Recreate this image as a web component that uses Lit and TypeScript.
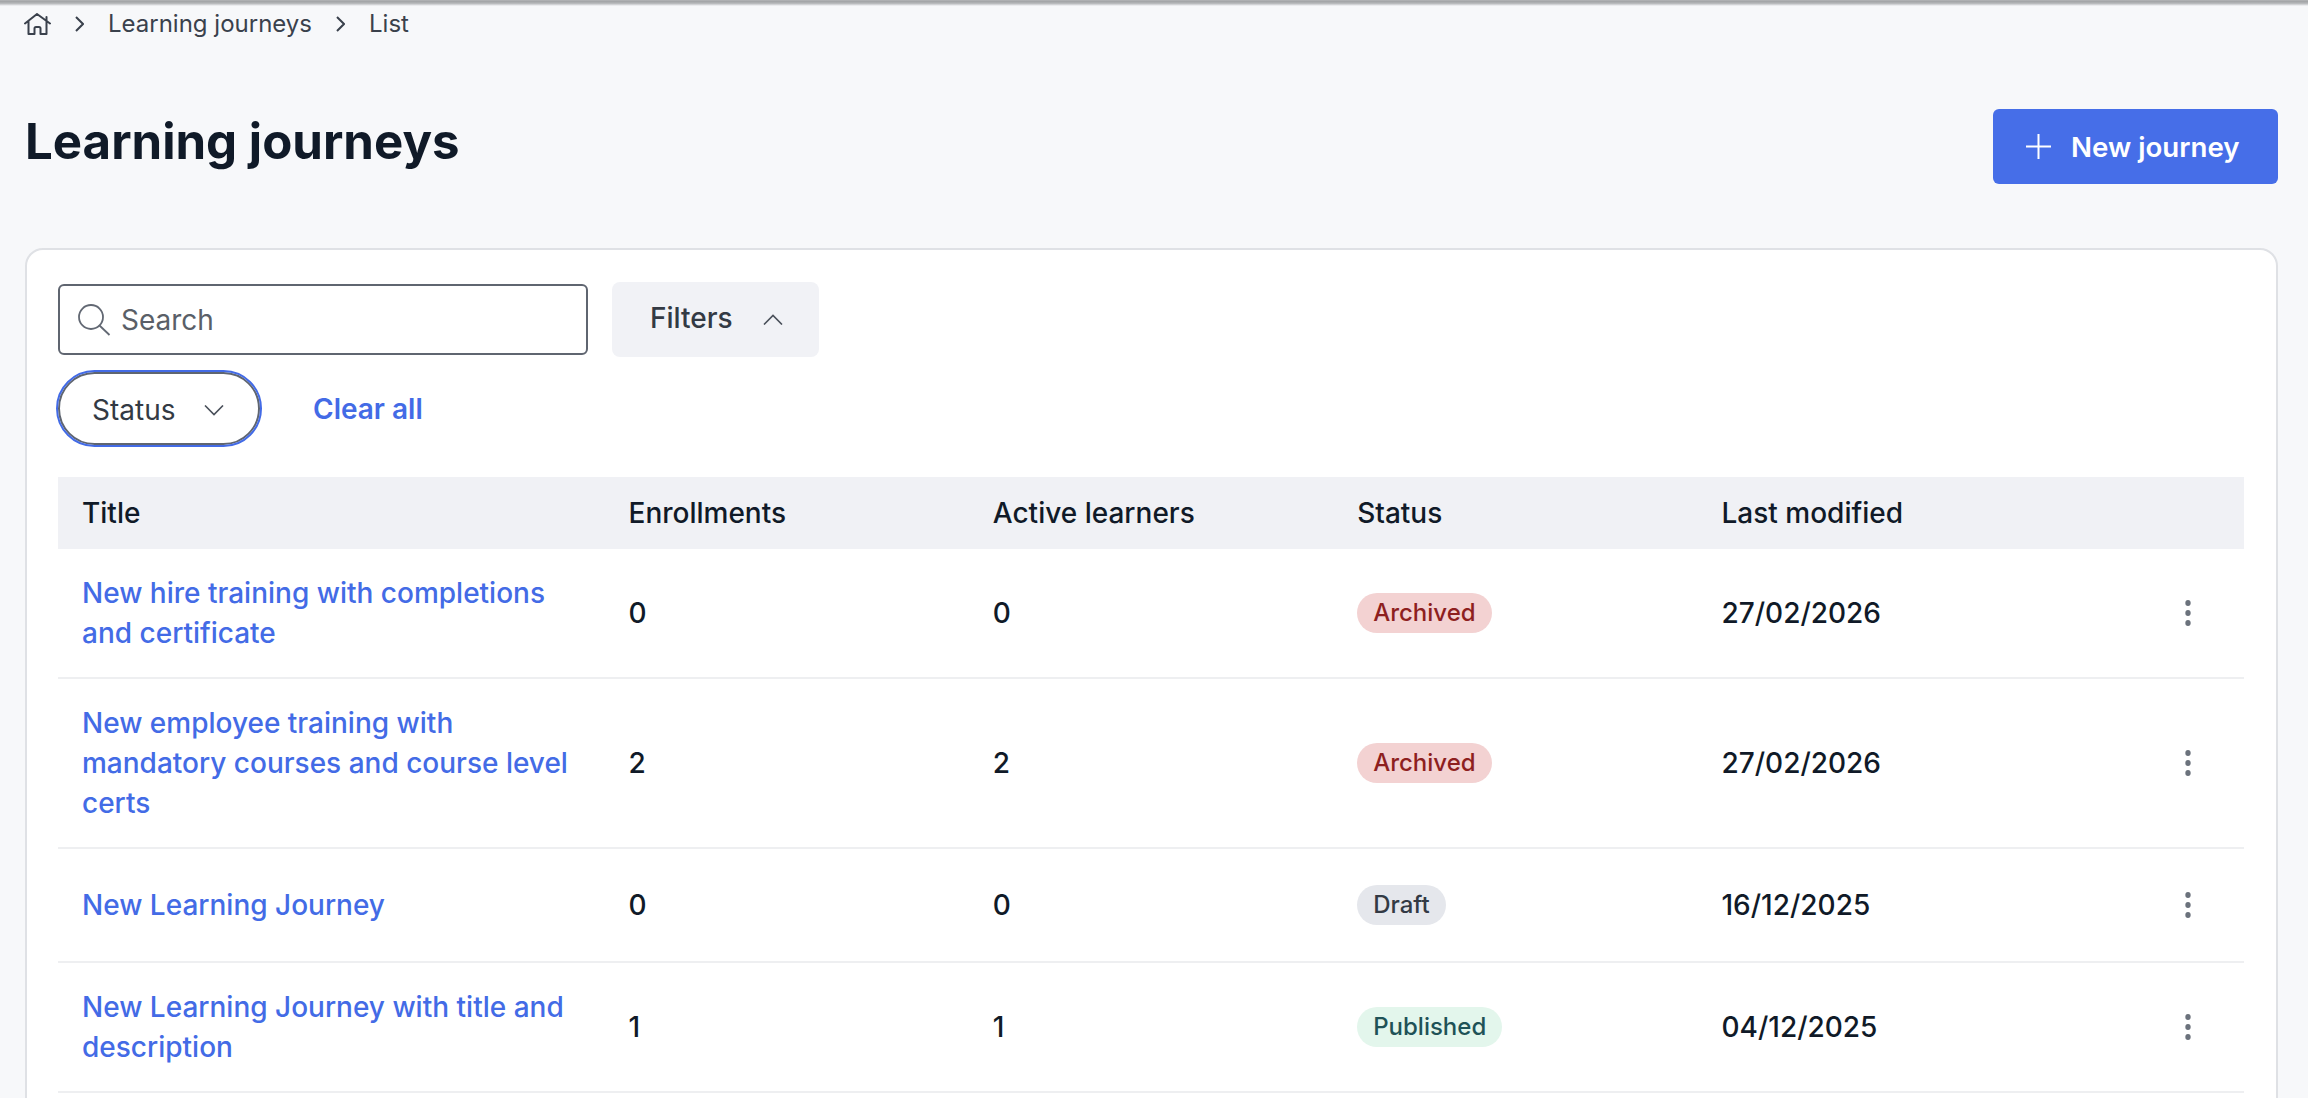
import { LitElement, html, css, svg } from "lit";
import { customElement } from "lit/decorators.js";

const rows = [
  { title: "New hire training with completions and certificate", enrollments: 0, active: 0, status: "Archived", date: "27/02/2026" },
  { title: "New employee training with mandatory courses and course level certs", enrollments: 2, active: 2, status: "Archived", date: "27/02/2026" },
  { title: "New Learning Journey", enrollments: 0, active: 0, status: "Draft", date: "16/12/2025" },
  { title: "New Learning Journey with title and description", enrollments: 1, active: 1, status: "Published", date: "04/12/2025" },
];

const chevronRight = svg`<path d="M1 1l7 7-7 7" fill="none" stroke="currentColor" stroke-width="2"/>`;

@customElement("app-root")
class AppRoot extends LitElement {
  static styles = css`
    :host {
      display: block;
      height: 1098px;
      overflow: hidden;
      background: #f7f8fa;
      font-family: Inter, "Noto Sans", sans-serif;
      color: #101a28;
    }

    .topbar {
      height: 6px;
      background: linear-gradient(#b4b5b7, #a4a6a8 25%, #b4b6b8 55%, #d8d9dc 80%, #f7f8fa);
    }

    .crumbs {
      display: flex;
      align-items: center;
      height: 35px;
      padding-left: 24px;
      font-size: 24px;
      color: #3a414c;
    }

    .home {
      width: 27px;
      height: 22px;
      margin-right: 24px;
    }

    .sep {
      width: 9px;
      height: 16px;
      margin-right: 24px;
      color: #3a414c;
    }

    .crumbs .link {
      margin-right: 24px;
    }

    .header {
      display: flex;
      justify-content: space-between;
      align-items: flex-start;
      padding: 68px 30px 0 25px;
    }

    h1 {
      margin: 0;
      font-size: 49.2px;
      line-height: 64px;
      font-weight: 700;
    }

    .new {
      display: flex;
      align-items: center;
      gap: 19px;
      width: 285px;
      height: 75px;
      box-sizing: border-box;
      padding-left: 32px;
      background: #466ee8;
      border-radius: 6px;
      color: #fff;
      font-size: 27.7px;
      font-weight: 600;
    }

    .new svg {
      width: 27px;
      height: 27px;
    }

    .card {
      margin: 64px 30px 0 25px;
      padding: 32px 32px 0 31px;
      height: 900px;
      background: #fff;
      border: 2px solid #dfe1e5;
      border-radius: 18px;
    }

    .filters {
      display: flex;
      align-items: center;
      gap: 24px;
    }

    .search {
      display: flex;
      align-items: center;
      gap: 10px;
      box-sizing: border-box;
      width: 530px;
      height: 71px;
      padding-left: 17px;
      border: 2px solid #5f6570;
      border-radius: 6px;
      color: #5a5f68;
      font-size: 28px;
    }

    .search svg {
      width: 34px;
      height: 32px;
    }

    .toggle {
      display: flex;
      align-items: center;
      gap: 30px;
      box-sizing: border-box;
      width: 207px;
      height: 75px;
      padding-left: 38px;
      background: #f1f2f6;
      border-radius: 8px;
      color: #333a44;
      font-size: 28px;
      font-weight: 500;
    }

    .toggle span {
      padding-bottom: 3px;
    }

    .toggle svg,
    .pill svg {
      width: 20px;
      height: 11px;
      color: #4a505a;
    }

    .chips {
      display: flex;
      align-items: center;
      gap: 53px;
      margin-top: 15px;
    }

    .pill {
      display: flex;
      align-items: center;
      gap: 29px;
      box-sizing: border-box;
      width: 202px;
      height: 73px;
      padding-left: 32px;
      background: #fff;
      border: 2px solid #5f6570;
      border-radius: 37px;
      outline: 2px solid #436be6;
      color: #333a44;
      font-size: 28px;
    }

    .pill > * {
      margin-top: 3px;
    }

    .clear {
      color: #436be6;
      font-size: 28px;
      font-weight: 600;
    }

    .table {
      margin-top: 32px;
    }

    .row {
      display: grid;
      grid-template-columns: 3fr 2fr 2fr 2fr 2fr 1fr;
      align-items: center;
      padding: 24px 0;
      border-bottom: 2px solid #eeeff1;
      font-size: 28px;
      line-height: 40px;
      font-weight: 500;
    }

    .row.head {
      padding: 0;
      height: 72px;
      background: #f0f1f5;
      border-bottom: 0;
    }

    .row > * {
      padding-left: 24px;
      min-width: 0;
    }

    .row .title {
      padding-right: 24px;
      color: #436be6;
    }

    .badge {
      display: block;
      width: fit-content;
      height: 40px;
      margin-left: 24px;
      padding: 0 16px;
      border-radius: 20px;
      font-size: 24px;
      line-height: 40px;
    }

    .row .badge-cell {
      padding-left: 0;
    }

    .Archived {
      background: #f3d2d2;
      color: #8e1f1f;
    }

    .Draft {
      background: #e5e7ec;
      color: #333a44;
    }

    .Published {
      background: #e3f6ec;
      color: #1f5257;
    }

    .kebab {
      display: flex;
      justify-content: flex-end;
      align-items: center;
      height: 64px;
      padding-right: 53px;
    }

    .kebab svg {
      width: 6px;
      height: 26px;
    }
  `;

  render() {
    return html`
      <div class="topbar"></div>
      <nav class="crumbs">
        <svg class="home" viewBox="0 0 27 22" fill="none" stroke="currentColor" stroke-width="2" stroke-linejoin="round" stroke-linecap="round">
          <path d="M1 10.5L13 1l13 9.5M4.5 8.5V21h6v-5.5a1.5 1.5 0 0 1 1.5-1.5h3a1.5 1.5 0 0 1 1.5 1.5V21h6V8.5M22.5 4v3.5" />
        </svg>
        <svg class="sep" viewBox="0 0 9 16">${chevronRight}</svg>
        <span class="link">Learning journeys</span>
        <svg class="sep" viewBox="0 0 9 16">${chevronRight}</svg>
        <span>List</span>
      </nav>
      <header class="header">
        <h1>Learning journeys</h1>
        <div class="new">
          <svg viewBox="0 0 27 27" fill="none" stroke="currentColor" stroke-width="2"><path d="M13.5 1v25M1 13.5h25" /></svg>
          New journey
        </div>
      </header>
      <section class="card">
        <div class="filters">
          <div class="search">
            <svg viewBox="0 0 34 32" fill="none" stroke="#626873" stroke-width="1.8"><circle cx="14" cy="13" r="12" /><path d="M22.5 21.5l10 9.5" /></svg>
            <span>Search</span>
          </div>
          <div class="toggle">
            <span>Filters</span>
            <svg viewBox="0 0 20 11" fill="none" stroke="currentColor" stroke-width="1.6"><path d="M1 10.5L10 1.5l9 9" /></svg>
          </div>
        </div>
        <div class="chips">
          <div class="pill">
            <span>Status</span>
            <svg viewBox="0 0 20 11" fill="none" stroke="currentColor" stroke-width="1.6"><path d="M1 .5l9 9 9-9" /></svg>
          </div>
          <span class="clear">Clear all</span>
        </div>
        <div class="table">
          <div class="row head">
            <span>Title</span><span>Enrollments</span><span>Active learners</span><span>Status</span><span>Last modified</span><span></span>
          </div>
          ${rows.map(
            (r) => html`
              <div class="row">
                <span class="title">${r.title}</span>
                <span>${r.enrollments}</span>
                <span>${r.active}</span>
                <span class="badge-cell"><span class="badge ${r.status}">${r.status}</span></span>
                <span>${r.date}</span>
                <span class="kebab">
                  <svg viewBox="0 0 6 26" fill="#6b727c"><ellipse cx="3" cy="3" rx="2.7" ry="3" /><ellipse cx="3" cy="13" rx="2.7" ry="3" /><ellipse cx="3" cy="23" rx="2.7" ry="3" /></svg>
                </span>
              </div>
            `
          )}
        </div>
      </section>
    `;
  }
}
